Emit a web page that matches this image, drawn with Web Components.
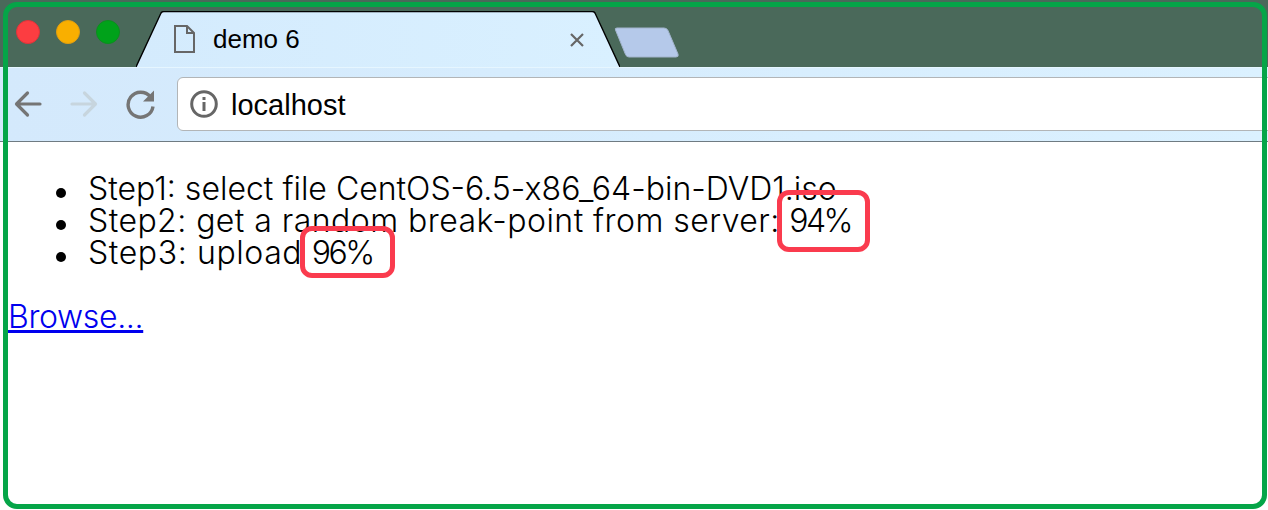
<!DOCTYPE html>
<html>
<head>
<meta charset="utf-8">
<title>demo 6</title>
<style>
  html, body { margin: 0; height: 100%; background: #fff; overflow: hidden; }
</style>
</head>
<body>
<browser-window>
  <browser-tab slot="tab">demo 6</browser-tab>
  <address-bar slot="address">localhost</address-bar>
  <demo-page>
    <step-item>Step1: select file CentOS-6.5-x86_64-bin-DVD1.iso</step-item>
    <step-item style="letter-spacing: 0.45px">Step2: get a random break-point from server: <ringed-value style="--ring-left: -12px; --ring-top: -15px; --ring-width: 93px; --ring-height: 62px">94%</ringed-value></step-item>
    <step-item style="letter-spacing: 0.6px">Step3: upload <ringed-value style="--ring-left: -12px; --ring-top: -11px; --ring-width: 95px; --ring-height: 52px">96%</ringed-value></step-item>
    <a slot="action" href="#">Browse...</a>
  </demo-page>
</browser-window>

<script>
class BrowserWindow extends HTMLElement {
  constructor() {
    super();
    this.attachShadow({ mode: "open" });
    this.shadowRoot.innerHTML = `
      <style>
        :host { display: block; position: relative; width: 1268px; height: 510px; overflow: hidden; background: #fff; }
        .strip { display: flex; height: 67px; background: #4a695a; padding-left: 16px; box-sizing: border-box; }
        .lights { display: flex; gap: 16px; padding-top: 20px; margin-right: 16px; }
        .light { width: 24px; height: 24px; border-radius: 50%; box-sizing: border-box; border: 1px solid; }
        .red { background: #fc3d41; border-color: #e0333a; }
        .amber { background: #f9af00; border-color: #e09e10; }
        .green { background: #00a21a; border-color: #0b8f1e; }
        .new-tab { margin: 27px 0 0 -6px; width: 65px; height: 31px; }
        .toolbar {
          display: flex; align-items: center; height: 75px; box-sizing: border-box;
          border-bottom: 1px solid #6f7b82; border-top: 1px solid #e6f6ff;
          background: linear-gradient(90deg, #d4e9fc 0%, #d6ecfd 40%, #dbf1ff 100%);
          padding: 0 0 1px 14px;
        }
        .nav { display: flex; align-items: center; gap: 28px; margin-right: 21px; }
        .nav svg { display: block; }
        .frame {
          position: absolute; left: 3px; top: 2px; width: 1264px; height: 507px;
          box-sizing: border-box; border: 5.5px solid #05a548; border-radius: 14px; pointer-events: none;
        }
      </style>
      <div class="strip">
        <div class="lights">
          <div class="light red"></div>
          <div class="light amber"></div>
          <div class="light green"></div>
        </div>
        <slot name="tab"></slot>
        <svg class="new-tab" viewBox="0 0 65 31">
          <path d="M1.5 3 Q0.5 1 3 1 H50 Q53 1 54 3.5 L64 27 Q65 30 62 30 H15 Q12.500 30 11.500 27.500 Z" fill="#b5c9ea" stroke="#a2b4cc"/>
        </svg>
      </div>
      <div class="toolbar">
        <div class="nav">
          <svg width="28" height="28" viewBox="0 0 28 28" fill="none" stroke="#757575" stroke-width="3.2" stroke-linecap="round" stroke-linejoin="round">
            <path d="M26 14 H3 M13.500 3 L2.500 14 L13.500 25"/>
          </svg>
          <svg width="28" height="28" viewBox="0 0 28 28" fill="none" stroke="#c7d5de" stroke-width="3.2" stroke-linecap="round" stroke-linejoin="round">
            <path d="M2 14 H25 M14.500 3 L25.500 14 L14.500 25"/>
          </svg>
          <svg width="30" height="30" viewBox="0 0 30 30" fill="none">
            <path d="M24.500 8 A12.500 12.500 0 1 0 27 17.500" stroke="#757575" stroke-width="3.400"/>
            <path d="M28 1.500 V12.500 H17 Z" fill="#757575"/>
          </svg>
        </div>
        <slot name="address"></slot>
      </div>
      <slot></slot>
      <div class="frame"></div>
    `;
  }
}

class BrowserTab extends HTMLElement {
  constructor() {
    super();
    this.attachShadow({ mode: "open" });
    this.shadowRoot.innerHTML = `
      <style>
        :host {
          display: flex; align-items: center; position: relative; box-sizing: border-box;
          width: 484px; height: 56px; margin-top: 11px; padding: 0 0 0 38px;
          font: 26px "Liberation Sans", Arial, sans-serif; color: #000;
        }
        .shape { position: absolute; left: 0; top: 0; }
        .doc, .label, .close { position: relative; }
        .doc { margin-right: 18px; display: block; }
        .label { flex: 1; }
        .close { margin: 2px 35px 0 0; display: block; }
      </style>
      <svg class="shape" width="484" height="56" viewBox="0 0 484 56">
        <defs>
          <linearGradient id="tabfill" x1="0" x2="1" y1="0" y2="0">
            <stop offset="0" stop-color="#d4ebfd"/><stop offset="1" stop-color="#d9f0ff"/>
          </linearGradient>
        </defs>
        <path d="M0 56 L25 2 Q26 0.500 28 0.500 H456 Q458 0.500 459 2 L484 56 Z" fill="url(#tabfill)"/>
        <path d="M0 56 L25 2 Q26 0.500 28 0.500 H456 Q458 0.500 459 2 L484 56" fill="none" stroke="#000" stroke-width="1.400"/>
      </svg>
      <svg class="doc" width="21" height="28" viewBox="0 0 21 28" fill="none" stroke="#666" stroke-width="2">
        <path d="M1 1 H13 L20 8 V27 H1 Z M13 1 V8 H20"/>
      </svg>
      <span class="label"><slot></slot></span>
      <svg class="close" width="16" height="16" viewBox="0 0 16 16" fill="none" stroke="#666" stroke-width="2.200">
        <path d="M2 2 L14 14 M14 2 L2 14"/>
      </svg>
    `;
  }
}

class AddressBar extends HTMLElement {
  constructor() {
    super();
    this.attachShadow({ mode: "open" });
    this.shadowRoot.innerHTML = `
      <style>
        :host {
          display: flex; align-items: center; flex: 1; height: 54px; box-sizing: border-box;
          margin-right: -10px; padding-left: 12px; gap: 13px;
          background: #fff; border: 1px solid #b2b5b7; border-radius: 6px;
          font: 29px "Liberation Sans", Arial, sans-serif; color: #000;
        }
        svg { display: block; }
        span { position: relative; top: 1px; }
      </style>
      <svg width="28" height="28" viewBox="0 0 28 28">
        <circle cx="14" cy="14" r="12.300" fill="none" stroke="#666" stroke-width="3"/>
        <rect x="12.500" y="12" width="3" height="9" fill="#666"/>
        <rect x="12.500" y="7" width="3" height="3" fill="#666"/>
      </svg>
      <span><slot></slot></span>
    `;
  }
}

class DemoPage extends HTMLElement {
  constructor() {
    super();
    this.attachShadow({ mode: "open" });
    this.shadowRoot.innerHTML = `
      <style>
        :host {
          display: block; padding: 31px 8px 0;
          font: 300 32px/32px Inter, "Liberation Sans", sans-serif; color: #000;
        }
        ul { margin: 0 0 32px; padding: 0 0 0 80px; }
        ::slotted(a) { color: #0000ee; text-decoration: underline; letter-spacing: -0.35px; }
      </style>
      <ul><slot></slot></ul>
      <slot name="action"></slot>
    `;
  }
}

class StepItem extends HTMLElement {
  constructor() {
    super();
    this.attachShadow({ mode: "open" });
    this.shadowRoot.innerHTML = `
      <style>
        :host { display: block; }
        .dot {
          display: inline-block; width: 10px; height: 10px; border-radius: 50%; background: #000;
          margin: 0 22px 0 -32px; vertical-align: 2px;
        }
      </style>
      <span class="dot"></span><slot></slot>
    `;
  }
}

class RingedValue extends HTMLElement {
  constructor() {
    super();
    this.attachShadow({ mode: "open" });
    this.shadowRoot.innerHTML = `
      <style>
        :host { position: relative; display: inline-block; letter-spacing: -2.5px; }
        .ring {
          position: absolute; left: var(--ring-left); top: var(--ring-top);
          width: var(--ring-width); height: var(--ring-height);
          box-sizing: border-box; border: 5.500px solid #fa3b4e; border-radius: 12px;
        }
      </style>
      <slot></slot>
      <div class="ring"></div>
    `;
  }
}

customElements.define("browser-window", BrowserWindow);
customElements.define("browser-tab", BrowserTab);
customElements.define("address-bar", AddressBar);
customElements.define("demo-page", DemoPage);
customElements.define("step-item", StepItem);
customElements.define("ringed-value", RingedValue);
</script>
</body>
</html>
